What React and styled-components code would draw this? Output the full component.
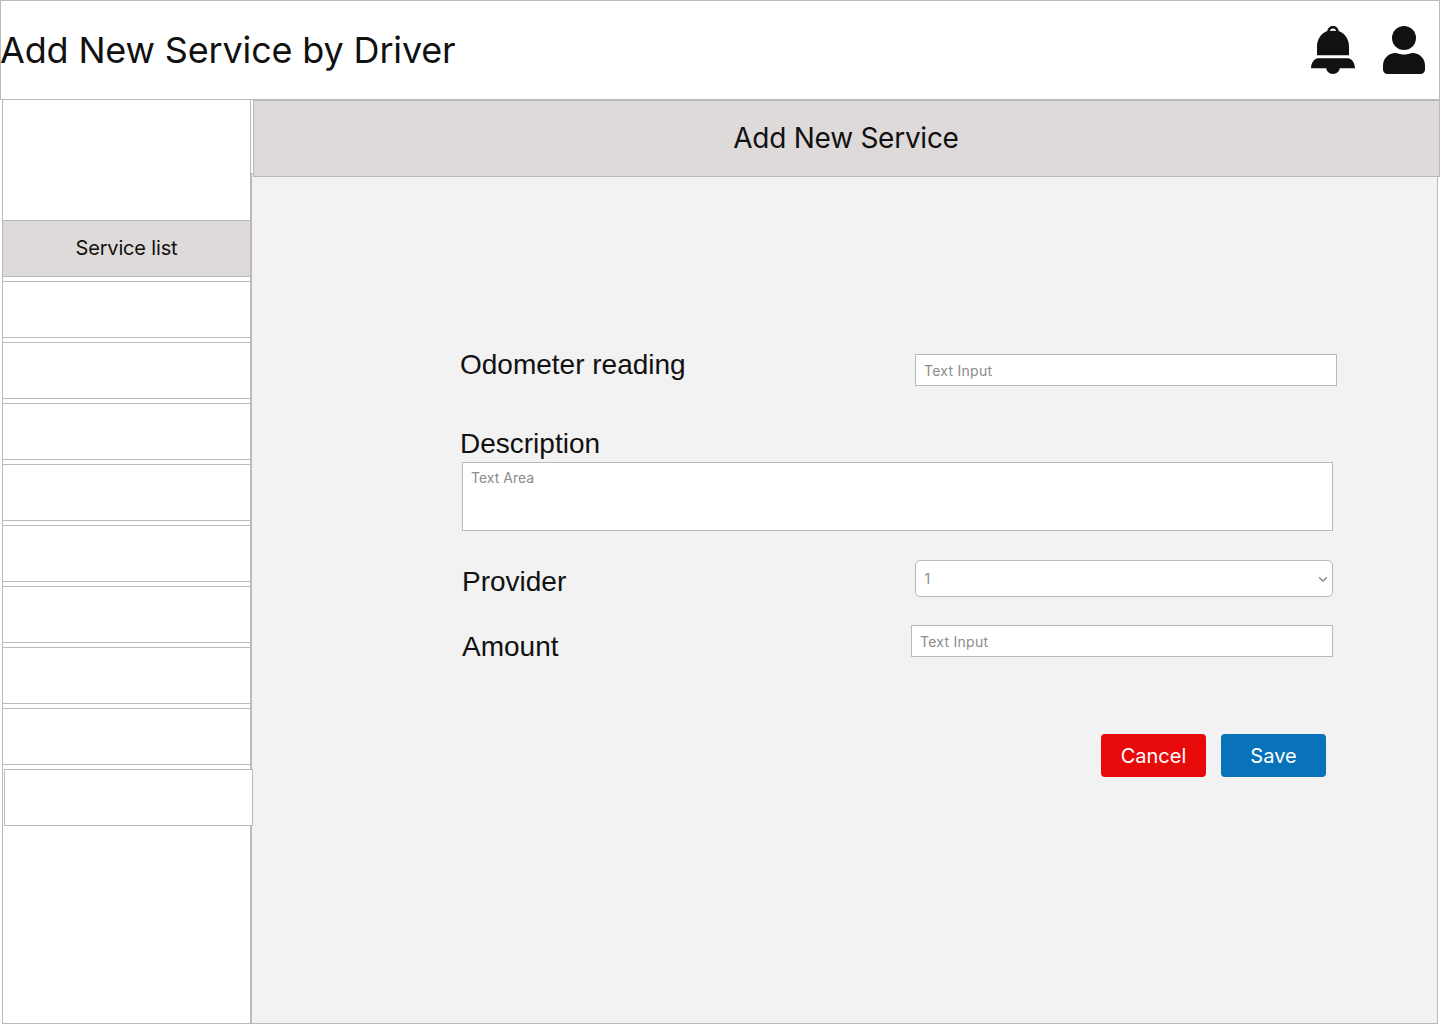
import React from "react";
import styled, { createGlobalStyle } from "styled-components";

const line = "#bababa";
const ink = "#111111";

const GlobalStyle = createGlobalStyle`
  *, *::before, *::after { box-sizing: border-box; }
  html, body { margin: 0; padding: 0; background: #ffffff; }
  body {
    overflow: hidden;
    color: ${ink};
    font-family: Inter, "Liberation Sans", sans-serif;
  }
`;

const Page = styled.div`
  display: flex;
  flex-direction: column;
  width: 1440px;
  height: 1024px;
`;

const TopBar = styled.header`
  display: flex;
  align-items: center;
  justify-content: space-between;
  flex: none;
  height: 100px;
  padding-right: 14px;
  border: 1px solid ${line};
`;

const Title = styled.h1`
  margin: 0 0 0 -1px;
  font-size: 36px;
  font-weight: 400;
  line-height: 44px;
  letter-spacing: -0.16px;
  white-space: nowrap;
`;

const TopIcons = styled.div`
  display: flex;
  align-items: center;
  gap: 28px;

  svg { display: block; fill: ${ink}; }
`;

const Columns = styled.div`
  display: flex;
  flex: 1;
  min-height: 0;
  padding-left: 2px;
`;

const Sidebar = styled.nav`
  position: relative;
  z-index: 1;
  display: flex;
  flex-direction: column;
  gap: 4px;
  flex: none;
  width: 249px;
  padding-top: 120px;
  background: #ffffff;
  border: 1px solid ${line};
  border-top: 0;
`;

const NavItem = styled.div`
  display: flex;
  align-items: center;
  justify-content: center;
  flex: none;
  width: 249px;
  height: 57px;
  padding-bottom: 1px;
  margin-left: ${(p) => (p.$shifted ? "1px" : "-1px")};
  border: 1px solid ${line};
  background: ${(p) => (p.$active ? "#dedad9" : "#ffffff")};
  font-size: 20px;
  font-weight: 400;
  line-height: 24px;
  letter-spacing: -0.17px;
`;

const Main = styled.main`
  display: flex;
  flex-direction: column;
  flex: 1;
`;

const Banner = styled.h2`
  position: relative;
  display: flex;
  align-items: center;
  justify-content: center;
  flex: none;
  height: 77px;
  margin: 0 0 -4px 2px;
  padding: 0 1px 1px 0;
  border: 1px solid ${line};
  background: #dedad9;
  font-size: 28px;
  font-weight: 400;
  line-height: 34px;
  letter-spacing: -0.26px;
`;

const Panel = styled.section`
  flex: 1;
  width: 1187px;
  padding: 174px 0 0 208px;
  border: 1px solid ${line};
  background: #f2f2f2;
`;

const Form = styled.form`
  display: flex;
  flex-direction: column;
  width: 877px;
`;

const Row = styled.div`
  display: flex;
  align-items: flex-start;
  justify-content: space-between;
  margin-bottom: ${(p) => p.$after}px;
  padding: 0 ${(p) => (p.$inset ? "4px 0 2px" : "0")};
`;

const Field = styled.div`
  display: flex;
  flex-direction: column;
  gap: 2px;
  margin-bottom: 29px;
`;

const Label = styled.label`
  margin-top: ${(p) => p.$drop || 0}px;
  font-family: "Liberation Sans", Arial, sans-serif;
  font-size: 28px;
  line-height: 32px;
`;

const TextInput = styled.input`
  width: 422px;
  height: 32px;
  margin: ${(p) => p.$drop || 0}px 0 0;
  padding: 1px 8px 0;
  border: 1px solid ${line};
  border-radius: 0;
  background: #ffffff;
  font: 14px Inter, sans-serif;
  letter-spacing: 0.26px;

  &::placeholder { color: #8c8c8c; opacity: 1; }
`;

const TextArea = styled.textarea`
  display: block;
  width: 871px;
  height: 69px;
  margin: 0 0 0 2px;
  padding: 6px 8px;
  border: 1px solid ${line};
  border-radius: 0;
  background: #ffffff;
  font: 14px/17px Inter, sans-serif;
  resize: none;

  &::placeholder { color: #8c8c8c; opacity: 1; }
`;

const SelectBox = styled.div`
  display: flex;
  align-items: center;
  width: 418px;
  height: 37px;
  padding-right: 4px;
  border: 1px solid ${line};
  border-radius: 5px;
  background: #ffffff;
`;

const Select = styled.select`
  flex: 1;
  height: 35px;
  padding: 0 8px 0 8.5px;
  border: 0;
  appearance: none;
  background: transparent;
  color: #8c8c8c;
  font: 14px Inter, sans-serif;
`;

const Actions = styled.div`
  display: flex;
  justify-content: flex-end;
  gap: 15px;
  padding-right: 11px;
`;

const Button = styled.button`
  width: 105px;
  height: 43px;
  padding: 0;
  border: 0;
  border-radius: 4px;
  background: ${(p) => p.$color};
  color: #ffffff;
  font: 20px/24px Inter, sans-serif;
`;

const BellIcon = () => (
  <svg width="44" height="48" viewBox="0 0 44 48" aria-hidden="true">
    <path
      fillRule="evenodd"
      d="M6 29.3V20.5C6 13.1 10.4 7.2 16.3 5.1C16.6 2.1 18.9 0 22 0S27.4 2.1 27.7 5.1C33.6 7.2 38 13.1 38 20.5V29.3ZM19 5Q22 4.4 25 5C24.7 1.7 19.3 1.7 19 5Z"
    />
    <path d="M6.5 32.2H37.5C41.3 33.2 44 37.3 44 42.3H28.7C28.5 45.6 25.6 48 22 48S15.5 45.6 15.3 42.3H0C0 37.3 2.7 33.2 6.5 32.2Z" />
  </svg>
);

const UserIcon = () => (
  <svg width="42" height="48" viewBox="0 0 42 48" aria-hidden="true">
    <circle cx="21" cy="12" r="12" />
    <path d="M12.5 27C14.5 27 16.5 28.5 21 28.5S27.5 27 29.5 27C36.5 27 42 32.5 42 39.5V43.5C42 46 40 48 37.5 48H4.5C2 48 0 46 0 43.5V39.5C0 32.5 5.5 27 12.5 27Z" />
  </svg>
);

const Chevron = () => (
  <svg width="10" height="6" viewBox="0 0 10 6" aria-hidden="true">
    <path d="M1.1 1.2L5 5L8.9 1.2" fill="none" stroke="#8c8c8c" strokeWidth="1.5" />
  </svg>
);

const navItems = ["Service list", "", "", "", "", "", "", "", "", ""];

export default function App() {
  return (
    <Page>
      <GlobalStyle />
      <TopBar>
        <Title>Add New Service by Driver</Title>
        <TopIcons>
          <BellIcon />
          <UserIcon />
        </TopIcons>
      </TopBar>
      <Columns>
        <Sidebar>
          {navItems.map((label, i) => (
            <NavItem key={i} $active={i === 0} $shifted={i === navItems.length - 1}>
              {label}
            </NavItem>
          ))}
        </Sidebar>
        <Main>
          <Banner>Add New Service</Banner>
          <Panel>
            <Form>
              <Row $after={41}>
                <Label htmlFor="odometer" $drop={1}>Odometer reading</Label>
                <TextInput id="odometer" placeholder="Text Input" $drop={6} />
              </Row>
              <Field>
                <Label htmlFor="description" $drop={1}>Description</Label>
                <TextArea id="description" placeholder="Text Area" />
              </Field>
              <Row $after={27} $inset>
                <Label htmlFor="provider" $drop={6}>Provider</Label>
                <SelectBox>
                  <Select id="provider">
                    <option>1</option>
                  </Select>
                  <Chevron />
                </SelectBox>
              </Row>
              <Row $after={71} $inset>
                <Label htmlFor="amount" $drop={6}>Amount</Label>
                <TextInput id="amount" placeholder="Text Input" />
              </Row>
              <Actions>
                <Button type="button" $color="#e80a0a">Cancel</Button>
                <Button type="button" $color="#0873bb">Save</Button>
              </Actions>
            </Form>
          </Panel>
        </Main>
      </Columns>
    </Page>
  );
}
